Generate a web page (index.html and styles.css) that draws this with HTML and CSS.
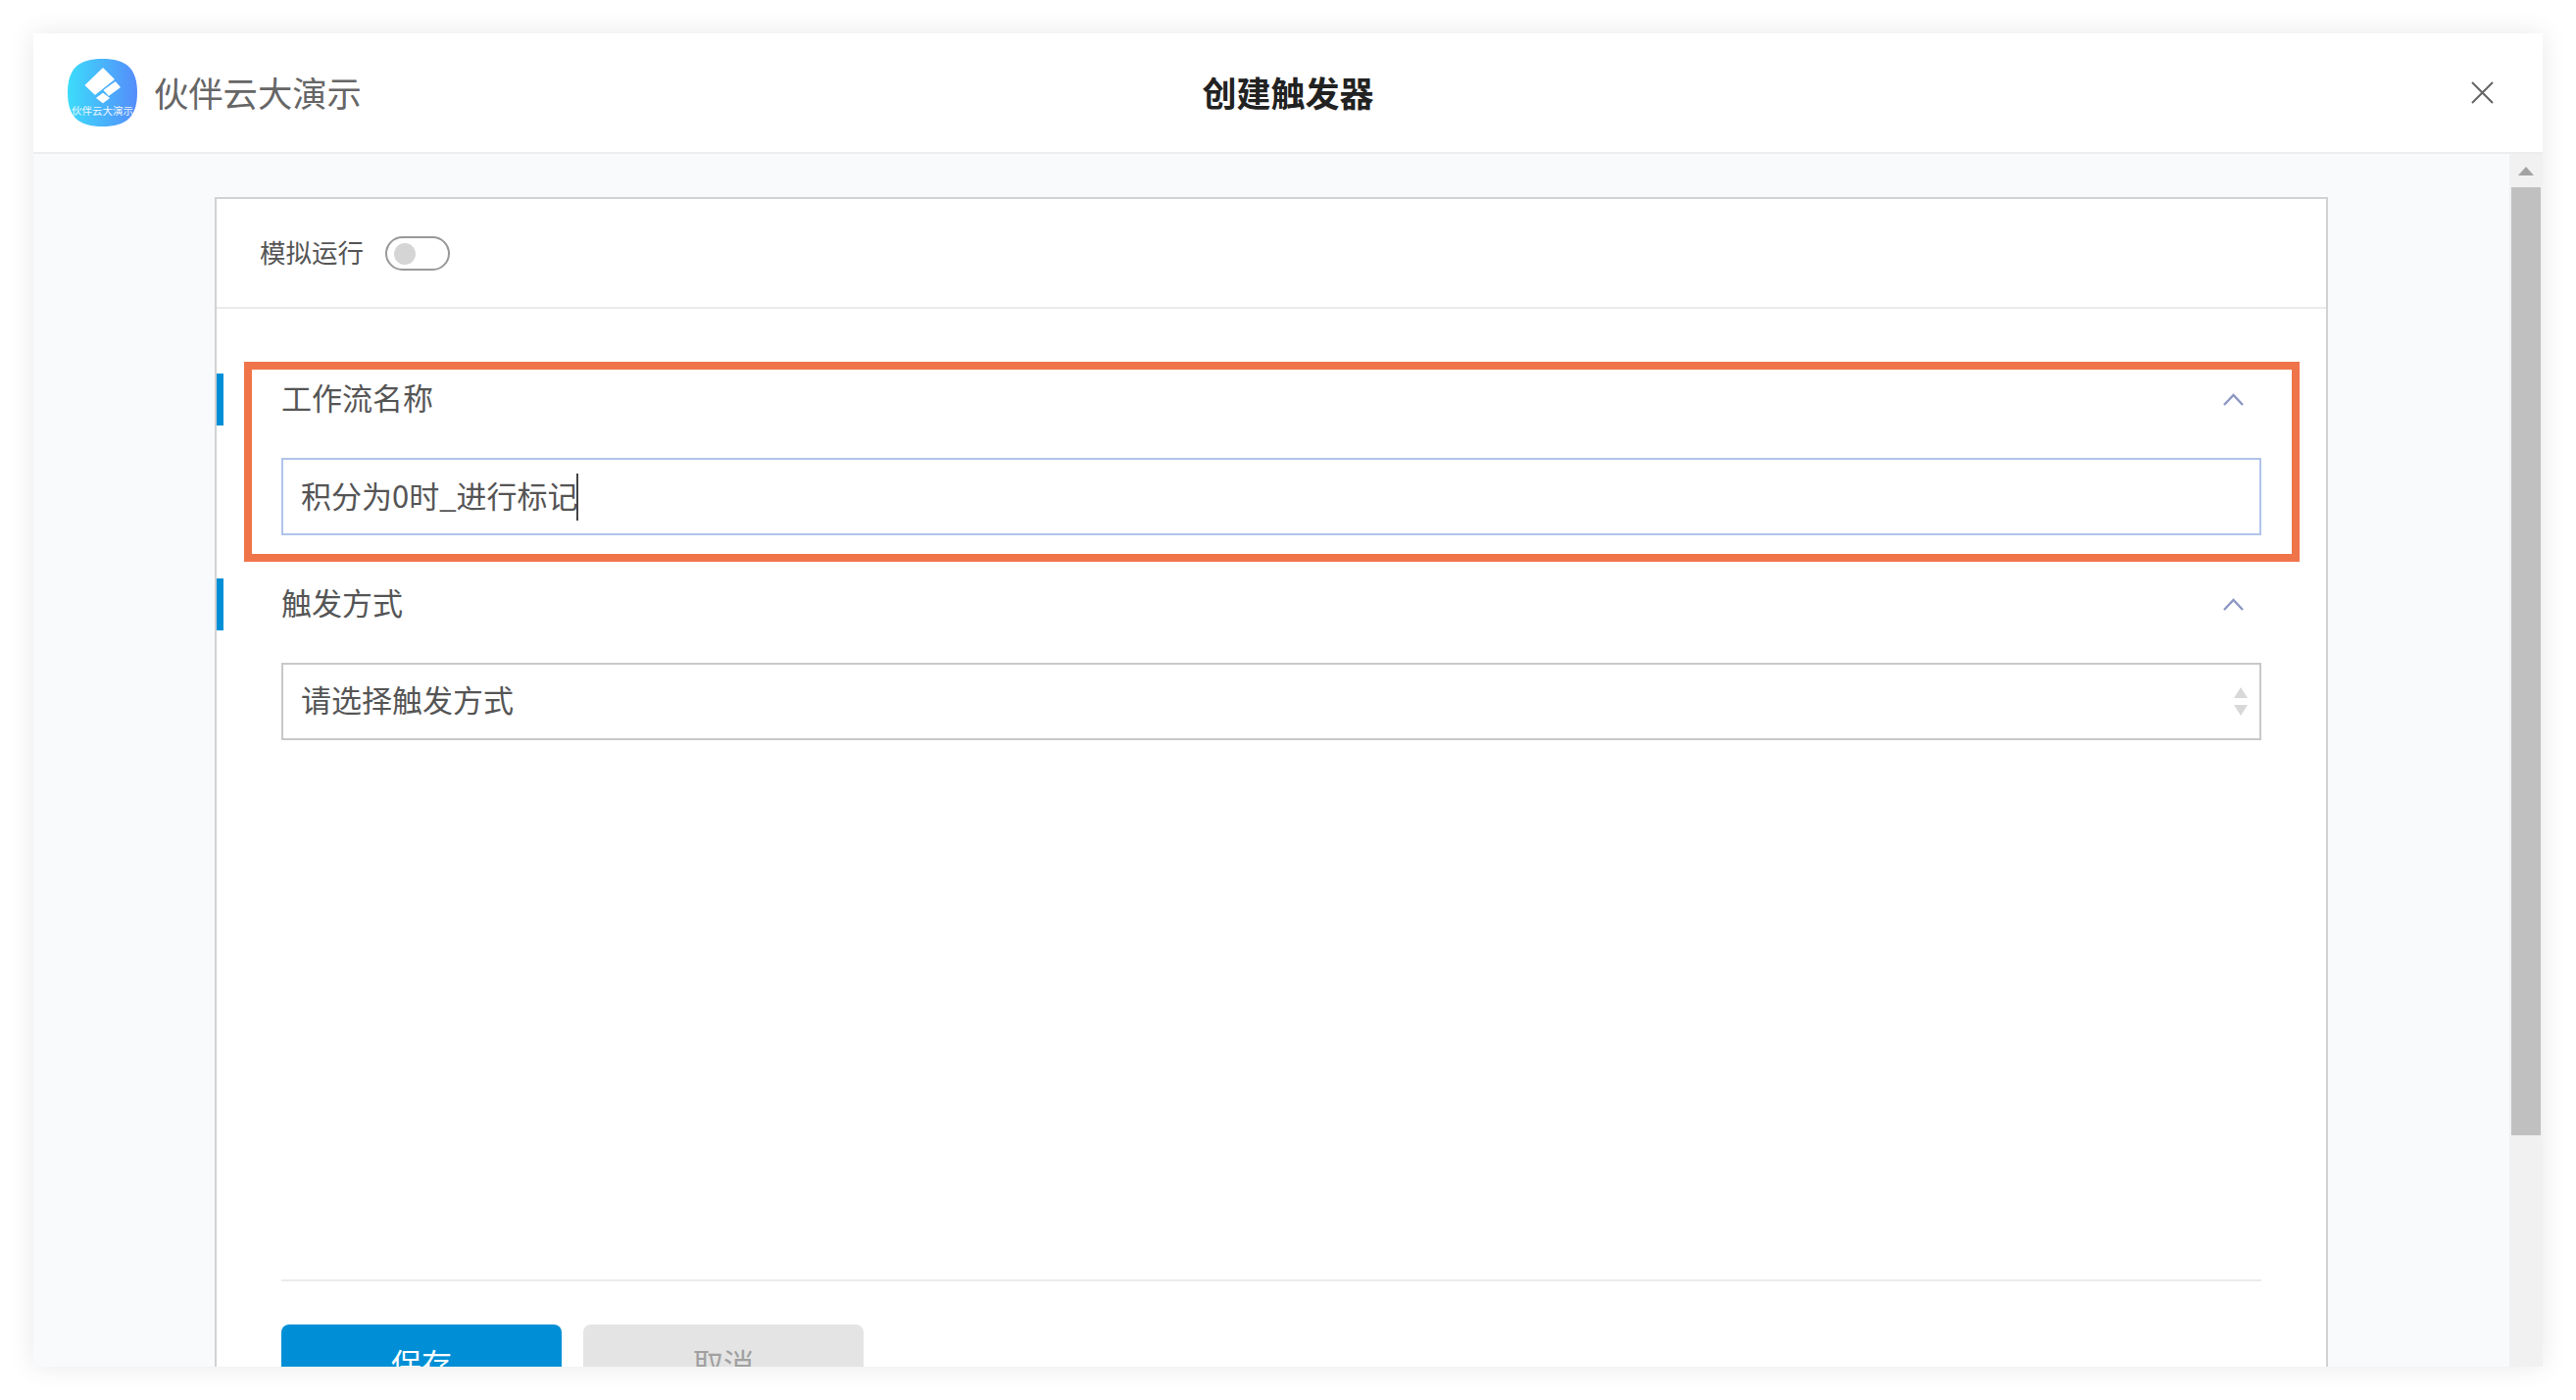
FILE: index.html
```html
<!DOCTYPE html>
<html lang="zh-CN">
<head>
<meta charset="utf-8">
<title>创建触发器</title>
<link rel="stylesheet" href="styles.css">
</head>
<body>
<div class="window">
  <header class="topbar">
    <div class="brand">
      <svg class="logo" viewBox="0 0 71 69" width="71" height="69">
        <defs>
          <linearGradient id="lg" x1="0" y1="0" x2="1" y2="0">
            <stop offset="0" stop-color="#3cdcfb"/>
            <stop offset="1" stop-color="#558cfb"/>
          </linearGradient>
        </defs>
        <path d="M35.5 0C60 0 71 10 71 34.5S60 69 35.5 69 0 59 0 34.5 11 0 35.5 0Z" fill="url(#lg)"/>
        <g fill="#fff" stroke="#fff" stroke-width="1.5" stroke-linejoin="round">
          <path d="M36 10 47 21 28 36 18.500 27Z"/>
          <path d="M48.500 24 53 29 42 37 37.500 32Z"/>
          <path d="M36 35.500 42 40 36 44.500 30 40Z"/>
        </g>
        <text class="logo-text" x="35.5" y="57" text-anchor="middle">伙伴云大演示</text>
      </svg>
      <span class="brand-name">伙伴云大演示</span>
    </div>
    <h1 class="page-title">创建触发器</h1>
    <svg class="close" viewBox="0 0 23 23" width="23" height="23">
      <path d="M1 1 22 22M22 1 1 22" fill="none" stroke="#666" stroke-width="2"/>
    </svg>
  </header>
  <div class="main">
    <div class="content">
      <div class="panel">
        <div class="panel-head">
          <span class="sim-label">模拟运行</span>
          <span class="toggle"><span class="knob"></span></span>
        </div>
        <div class="panel-body">
          <section class="section">
            <div class="section-head">
              <span class="bar"></span>
              <span class="section-title">工作流名称</span>
              <svg class="chevron" viewBox="0 0 21 13" width="21" height="13"><path d="M1 12 10.5 2 20 12" fill="none" stroke="#8c97c4" stroke-width="2.4"/></svg>
            </div>
            <div class="field field-active"><span class="field-text">积分为0时_进行标记</span><span class="caret"></span></div>
          </section>
          <section class="section">
            <div class="section-head">
              <span class="bar"></span>
              <span class="section-title">触发方式</span>
              <svg class="chevron" viewBox="0 0 21 13" width="21" height="13"><path d="M1 12 10.5 2 20 12" fill="none" stroke="#8c97c4" stroke-width="2.4"/></svg>
            </div>
            <div class="field field-select">
              <span class="field-text">请选择触发方式</span>
              <svg class="updown" viewBox="0 0 14 29" width="14" height="29"><path d="M7 0 14 11H0Z M0 18H14L7 29Z" fill="#d8d8d8"/></svg>
            </div>
          </section>
          <div class="footer">
            <button class="btn btn-save" type="button">保存</button>
            <button class="btn btn-cancel" type="button">取消</button>
          </div>
          <div class="highlight"></div>
        </div>
      </div>
    </div>
    <div class="scrollbar">
      <div class="scroll-arrow"><svg viewBox="0 0 16 9" width="16" height="9"><path d="M8 0 16 9H0Z" fill="#a3a3a3"/></svg></div>
      <div class="scroll-thumb"></div>
    </div>
  </div>
</div>
</body>
</html>
```
FILE: styles.css
```css
* { box-sizing: border-box; }
html, body { height: 100%; }
body {
  margin: 0;
  padding: 34px;
  height: 1428px;
  overflow: hidden;
  background: #fff;
  font-family: "Noto Sans CJK SC", "Noto Sans", sans-serif;
  color: #555;
}
.window {
  width: 2560px;
  height: 1360px;
  display: flex;
  flex-direction: column;
  background: #fff;
  box-shadow: 0 0 26px rgba(0, 0, 0, .09);
}
.topbar {
  flex: none;
  height: 123px;
  padding: 26px 50px 0 35px;
  border-bottom: 2px solid #ededed;
  display: flex;
  align-items: flex-start;
  position: relative;
  background: #fff;
}
.brand { display: flex; align-items: center; gap: 17px; }
.logo { display: block; }
.logo-text { font-size: 10.5px; fill: #fff; opacity: .9; }
.brand-name { font-size: 35.3px; line-height: 67px; padding-bottom: 2px; color: #666; }
.page-title {
  position: absolute;
  left: 0;
  right: 0;
  top: 0;
  margin: 0;
  text-align: center;
  font-size: 35px;
  line-height: 119px;
  font-weight: 700;
  color: #222;
}
.close { margin-left: auto; margin-top: 23px; }
.main { flex: 1; min-height: 0; display: flex; overflow: hidden; }
.content {
  flex: 1;
  min-width: 0;
  padding: 44px 185px 0;
  background: #f9fafc;
  overflow: hidden;
}
.panel {
  border: 2px solid #d2d2d2;
  background: #fff;
}
.panel-head {
  height: 110px;
  padding-left: 44px;
  display: flex;
  align-items: center;
  gap: 22px;
}
.sim-label { font-size: 26.5px; color: #555; padding-bottom: 3px; }
.toggle {
  width: 66px;
  height: 35px;
  border: 2px solid #999;
  border-radius: 18px;
  padding: 5px 7px;
  display: block;
}
.knob {
  display: block;
  width: 22px;
  height: 22px;
  border-radius: 50%;
  background: #d5d5d5;
}
.panel-body {
  position: relative;
  border-top: 2px solid #ebebeb;
  padding: 66px 66px 0;
}
.section + .section { margin-top: 44px; }
.section-head {
  height: 53px;
  margin-left: -66px;
  display: flex;
  align-items: center;
  padding-right: 18px;
}
.bar { width: 7px; height: 53px; background: #008fd6; margin-right: 59px; }
.section-title { font-size: 31px; line-height: 47px; padding-bottom: 6px; color: #555; }
.chevron { margin-left: auto; }
.field {
  margin-top: 33px;
  height: 79px;
  padding: 0 12px 0 18px;
  display: flex;
  align-items: center;
  font-size: 31px;
  color: #555;
  border: 2px solid #c8c8c8;
}
.field-text { padding-bottom: 5px; }
.field-select .field-text { padding-bottom: 7px; }
.field-active { border-color: #b0c4ea; }
.caret { width: 2px; height: 48px; background: #444; margin-left: -2px; }
.field-select { justify-content: space-between; }
.footer {
  margin-top: 550px;
  padding-top: 44px;
  border-top: 2px solid #ebebeb;
  display: flex;
  gap: 22px;
}
.btn {
  width: 286px;
  height: 82px;
  border: 0;
  padding: 0 0 5px;
  border-radius: 8px;
  font: inherit;
  font-size: 31px;
}
.btn-save { background: #008fd6; color: #fff; }
.btn-cancel { background: #e4e4e4; color: #a0a0a0; }
.highlight {
  position: absolute;
  left: 28px;
  top: 54px;
  width: 2097px;
  height: 204px;
  border: 8px solid #f0744a;
  pointer-events: none;
}
.scrollbar {
  flex: none;
  width: 34px;
  background: #f1f1f1;
  display: flex;
  flex-direction: column;
  align-items: center;
}
.scroll-arrow {
  height: 34px;
  width: 100%;
  padding-top: 13px;
  display: flex;
  justify-content: center;
  align-items: flex-start;
}
.scroll-thumb { width: 30px; height: 967px; background: #c0c0c0; }
```
